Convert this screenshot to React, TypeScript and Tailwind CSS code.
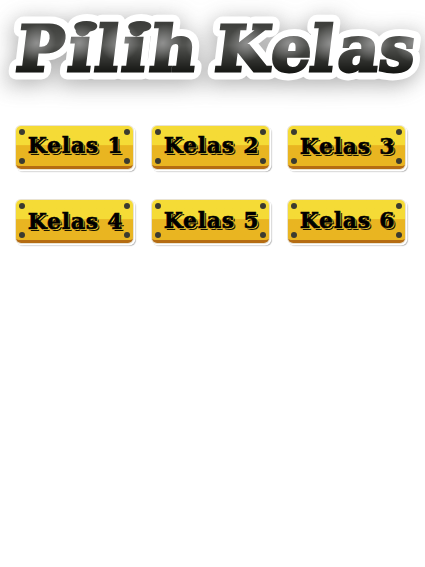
const classes = [
  { n: 1, shift: 'pt-0' },
  { n: 2, shift: 'pt-0' },
  { n: 3, shift: 'pt-px' },
  { n: 4, shift: 'pt-0.5' },
  { n: 5, shift: 'pt-px' },
  { n: 6, shift: 'pt-px' },
];

function Bolt() {
  return <span className="size-[6px] shrink-0 rounded-full bg-[#3b3b30]" />;
}

function Bolts() {
  return (
    <span className="flex h-full w-[6px] shrink-0 flex-col justify-between pt-[3px] pb-[2px]">
      <Bolt />
      <Bolt />
    </span>
  );
}

function ClassButton({ n, shift }: { n: number; shift: string }) {
  return (
    <button className="flex h-[43px] w-[117px] items-stretch justify-between rounded-[5px] border-b-[3px] border-[#b56c12] bg-linear-to-b from-[#f5db36] from-[47%] to-[#e9b521] to-[49%] px-[3px] shadow-[0_0_0_1px_#e9e3d2,1px_1px_0_1.5px_#ffffff,2px_2px_1px_1px_#b4b4b4]">
      <Bolts />
      <span className={`${shift} -mr-1.5 -ml-1 whitespace-nowrap text-center font-['DejaVu_Serif',serif] text-[22px] leading-[39px] font-bold tracking-[0.7px] text-black [-webkit-text-stroke:0.6px_black] [text-shadow:1px_1px_0_#f2cf38,2px_2px_0_#171200]`}>
        Kelas {n}
      </span>
      <Bolts />
    </button>
  );
}

function Title() {
  const words = (
    <>
      <text x="14 66 93 120 148" y="71">Pilih</text>
      <text x="213 269 308 336 377" y="71">Kelas</text>
      <ellipse cx="80" cy="26.5" rx="10" ry="4" />
      <ellipse cx="134" cy="26.5" rx="10" ry="4" />
    </>
  );
  return (
    <h1 className="h-[125.5px] w-full">
      <svg width="425" height="125" viewBox="0 0 425 125" fontFamily="DejaVu Serif, serif" fontWeight="700" fontSize="63" role="img" aria-label="Pilih Kelas">
        <defs>
          <linearGradient id="metal" x1="0" y1="0" x2="0" y2="1">
            <stop offset="0" stopColor="#3a3b38" />
            <stop offset="0.45" stopColor="#535451" />
            <stop offset="1" stopColor="#0d0e0b" />
          </linearGradient>
          <radialGradient id="glow">
            <stop offset="0" stopColor="#a0a0a0" stopOpacity="0.8" />
            <stop offset="1" stopColor="#a0a0a0" stopOpacity="0" />
          </radialGradient>
          <pattern id="steel" patternUnits="userSpaceOnUse" x="12" y="20" width="42" height="56">
            <rect width="42" height="56" fill="url(#metal)" />
            <ellipse cx="21" cy="23" rx="19" ry="19" fill="url(#glow)" />
          </pattern>
          <filter id="soft" x="-30%" y="-70%" width="160%" height="240%">
            <feGaussianBlur stdDeviation="11" />
          </filter>
        </defs>
        <g transform="translate(9 0) skewX(-7)">
          <g aria-hidden="true" filter="url(#soft)" fill="#777" stroke="#777" strokeWidth="17" opacity="0.6" transform="translate(0 4)">{words}</g>
          <g aria-hidden="true" fill="white" stroke="white" strokeWidth="17" strokeLinejoin="round">{words}</g>
          <g fill="url(#steel)" stroke="url(#steel)" strokeWidth="3">{words}</g>
        </g>
      </svg>
    </h1>
  );
}

export default function App() {
  return (
    <main className="h-[567px] w-[425px] overflow-hidden bg-white">
      <Title />
      <div className="grid grid-cols-[117px_117px_117px] gap-x-[19px] gap-y-[31px] pl-[16px]">
        {classes.map((c) => (
          <ClassButton key={c.n} {...c} />
        ))}
      </div>
    </main>
  );
}
